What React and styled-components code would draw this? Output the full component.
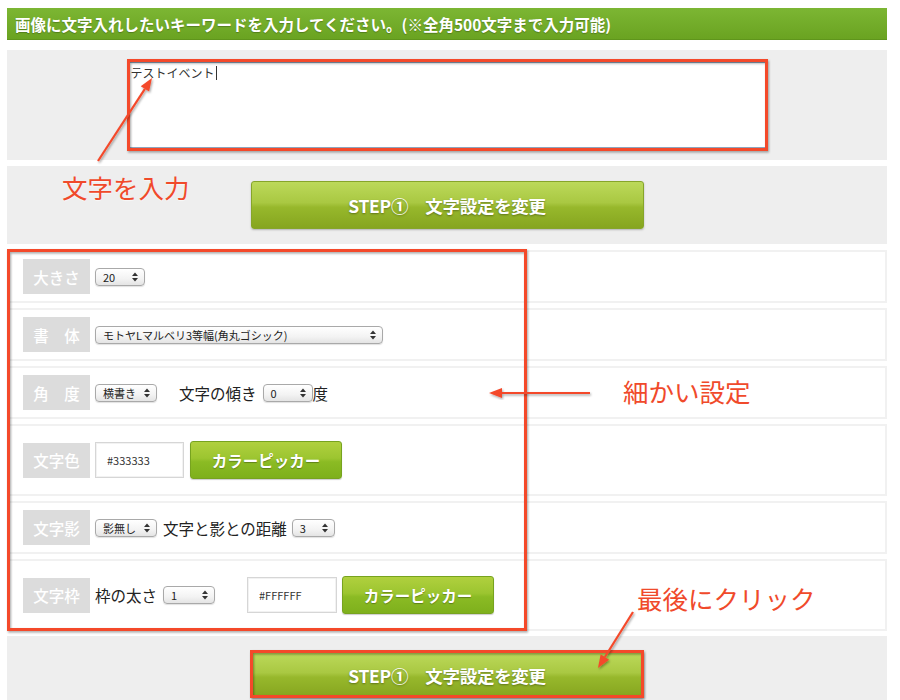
import React from "react";
import styled, { createGlobalStyle } from "styled-components";

const Global = createGlobalStyle`
  html, body { margin: 0; padding: 0; background: #fff; }
  body { font-family: "Noto Sans CJK JP", "Noto Sans", sans-serif; color: #222; }
`;

const Page = styled.div`
  position: relative;
  width: 900px;
  height: 700px;
  overflow: hidden;
  box-sizing: border-box;
  padding: 8px 13px 0 7px;
`;

const Header = styled.div`
  height: 32px;
  display: flex;
  align-items: center;
  padding-left: 8px;
  background: linear-gradient(#7cb633, #6aa321);
  border-bottom: 1px solid #5f951c;
  box-sizing: border-box;
  color: #fff;
  font-weight: 700;
  font-size: 15.5px;
  letter-spacing: 0;
  text-shadow: 0 1px 1px rgba(0, 0, 0, 0.25);
`;

const GrayBox = styled.div`
  background: #eeeeee;
  display: flex;
  justify-content: center;
  padding: ${(p) => p.$pad};
  margin-top: ${(p) => p.$mt}px;
`;

const TextArea = styled.div`
  width: 637px;
  height: 86px;
  box-sizing: border-box;
  background: #fff;
  border: 1px solid #8fa7bf;
  padding: 1px 1px;
  font-size: 12px;
  color: #333;
  position: relative;
`;

const Caret = styled.span`
  display: inline-block;
  width: 1px;
  height: 14px;
  background: #333;
  vertical-align: -2px;
  margin-left: 1px;
`;

const StepButton = styled.div`
  width: 393px;
  height: ${(p) => p.$h}px;
  box-sizing: border-box;
  border: 1px solid #86a52a;
  border-radius: 3px;
  background: linear-gradient(#bcd95a 0%, #a9c842 45%, #97b82c 55%, #86a51f 100%);
  box-shadow: 0 1px 2px rgba(0, 0, 0, 0.25);
  display: flex;
  align-items: center;
  justify-content: center;
  color: #fff;
  font-weight: 700;
  font-size: 17.5px;
  letter-spacing: -0.3px;
  text-shadow: 0 1px 2px rgba(0, 0, 0, 0.35);
  white-space: pre;
`;

const Rows = styled.div`
  display: flex;
  flex-direction: column;
  gap: 5px;
  margin-top: 6px;
`;

const Row = styled.div`
  display: flex;
  align-items: center;
  background: #fff;
  border: 2px solid #f1f1f1;
  padding: ${(p) => (p.$tall ? "15px 14px" : "7px 14px")};
  min-height: 35px;
`;

const Label = styled.div`
  width: 67px;
  height: 35px;
  flex: none;
  background: #dcdcdc;
  color: #fff;
  font-size: 15.5px;
  font-weight: 500;
  display: flex;
  align-items: center;
  justify-content: center;
  white-space: pre;
  margin-right: ${(p) => p.$mr ?? 5}px;
`;

const SelectBox = styled.div`
  display: inline-flex;
  align-items: center;
  justify-content: space-between;
  width: ${(p) => p.$w}px;
  height: 18px;
  box-sizing: border-box;
  padding: 0 5px 0 7px;
  border: 1px solid #a9a9a9;
  border-radius: 4px;
  background: linear-gradient(#ffffff, #f3f3f3 60%, #e4e4e4);
  box-shadow: 0 1px 1px rgba(0, 0, 0, 0.12);
  font-size: 11px;
  color: #222;
  flex: none;
  margin-left: ${(p) => p.$ml ?? 0}px;
  margin-right: ${(p) => p.$mr ?? 0}px;
  white-space: nowrap;
`;

const Text = styled.span`
  font-size: 15.5px;
  color: #222;
  margin-left: ${(p) => p.$ml ?? 0}px;
  margin-right: ${(p) => p.$mr ?? 0}px;
  white-space: nowrap;
`;

const ColorInput = styled.div`
  width: ${(p) => p.$w}px;
  height: 36px;
  box-sizing: border-box;
  border: 1px solid #d6d6d6;
  box-shadow: inset 0 0 0 1px #f2f2f2;
  background: #fff;
  display: flex;
  align-items: center;
  padding-left: 11px;
  font-size: 11px;
  color: #333;
  flex: none;
  margin-left: ${(p) => p.$ml ?? 0}px;
`;

const PickerButton = styled.div`
  width: 152px;
  height: 38px;
  box-sizing: border-box;
  margin-left: ${(p) => p.$ml ?? 6}px;
  border: 1px solid #77a31f;
  border-radius: 3px;
  background: linear-gradient(#b0d03e 0%, #9cc530 45%, #8bbb24 55%, #7eb01c 100%);
  box-shadow: 0 1px 1px rgba(0, 0, 0, 0.2);
  color: #fff;
  font-weight: 700;
  font-size: 15.5px;
  display: flex;
  align-items: center;
  justify-content: center;
  text-shadow: 0 1px 1px rgba(0, 0, 0, 0.3);
  flex: none;
`;

const Note = styled.span`
  position: absolute;
  left: ${(p) => p.$x}px;
  top: ${(p) => p.$y}px;
  color: #f04a2b;
  font-size: 25.5px;
  line-height: 1;
  white-space: nowrap;
  text-shadow: 0 1px 1px rgba(255, 255, 255, 0.6);
`;

const Overlay = styled.svg`
  position: absolute;
  left: 0;
  top: 0;
  pointer-events: none;
`;

const RED = "#f4492b";

function Arrows() {
  return (
    <svg width="8" height="10" viewBox="0 0 8 10">
      <path d="M4 0.5 L7 4 L1 4 Z" fill="#333" />
      <path d="M4 9.5 L7 6 L1 6 Z" fill="#333" />
    </svg>
  );
}

function Select({ w, children, ml, mr }) {
  return (
    <SelectBox $w={w} $ml={ml} $mr={mr}>
      <span>{children}</span>
      <Arrows />
    </SelectBox>
  );
}

function Arrow({ x1, y1, x2, y2 }) {
  const a = Math.atan2(y2 - y1, x2 - x1);
  const len = 13;
  const half = 5;
  const bx = x2 - len * Math.cos(a);
  const by = y2 - len * Math.sin(a);
  const px = -Math.sin(a) * half;
  const py = Math.cos(a) * half;
  return (
    <g filter="url(#sh)">
      <line x1={x1} y1={y1} x2={bx} y2={by} stroke={RED} strokeWidth="2.2" />
      <polygon
        points={`${x2},${y2} ${bx + px},${by + py} ${bx - px},${by - py}`}
        fill={RED}
      />
    </g>
  );
}

export default function App() {
  return (
    <Page>
      <Global />
      <Header>画像に文字入れしたいキーワードを入力してください。(※全角500文字まで入力可能)</Header>

      <GrayBox $pad="12px 0" $mt={10}>
        <TextArea>
          テストイベント<Caret />
        </TextArea>
      </GrayBox>

      <GrayBox $pad="15px 0" $mt={6}>
        <StepButton $h={48}>{"STEP①　文字設定を変更"}</StepButton>
      </GrayBox>

      <Rows>
        <Row>
          <Label>大きさ</Label>
          <Select w={50}>20</Select>
        </Row>
        <Row>
          <Label>{"書　体"}</Label>
          <Select w={288}>モトヤLマルベリ3等幅(角丸ゴシック)</Select>
        </Row>
        <Row>
          <Label>{"角　度"}</Label>
          <Select w={62} mr={22}>横書き</Select>
          <Text $mr={6}>文字の傾き</Text>
          <Select w={50}>0</Select>
          <Text>度</Text>
        </Row>
        <Row $tall>
          <Label>文字色</Label>
          <ColorInput $w={89}>#333333</ColorInput>
          <PickerButton>カラーピッカー</PickerButton>
        </Row>
        <Row>
          <Label>文字影</Label>
          <Select w={62} mr={6}>影無し</Select>
          <Text $mr={5}>文字と影との距離</Text>
          <Select w={43}>3</Select>
        </Row>
        <Row $tall>
          <Label>文字枠</Label>
          <Text $mr={6}>枠の太さ</Text>
          <Select w={52}>1</Select>
          <ColorInput $w={90} $ml={32}>#FFFFFF</ColorInput>
          <PickerButton $ml={5}>カラーピッカー</PickerButton>
        </Row>
      </Rows>

      <GrayBox $pad="16px 0 20px" $mt={5}>
        <StepButton $h={46}>{"STEP①　文字設定を変更"}</StepButton>
      </GrayBox>

      <Note $x={62} $y={174}>文字を入力</Note>
      <Note $x={623} $y={378}>細かい設定</Note>
      <Note $x={637} $y={585}>最後にクリック</Note>

      <Overlay width="900" height="700" viewBox="0 0 900 700">
        <defs>
          <filter id="sh" x="-20%" y="-20%" width="140%" height="140%">
            <feDropShadow dx="1" dy="1.5" stdDeviation="1.2" floodColor="#000" floodOpacity="0.35" />
          </filter>
        </defs>
        <g filter="url(#sh)" fill="none" stroke={RED} strokeWidth="3">
          <rect x="128.5" y="60.5" width="638" height="89" />
          <rect x="8.5" y="250.5" width="517" height="379" />
          <rect x="251.5" y="651.5" width="391" height="45" />
        </g>
        <Arrow x1={98} y1={161} x2={152} y2={78} />
        <Arrow x1={590} y1={393} x2={489} y2={393} />
        <Arrow x1={633} y1={612} x2={598} y2={668} />
      </Overlay>
    </Page>
  );
}
